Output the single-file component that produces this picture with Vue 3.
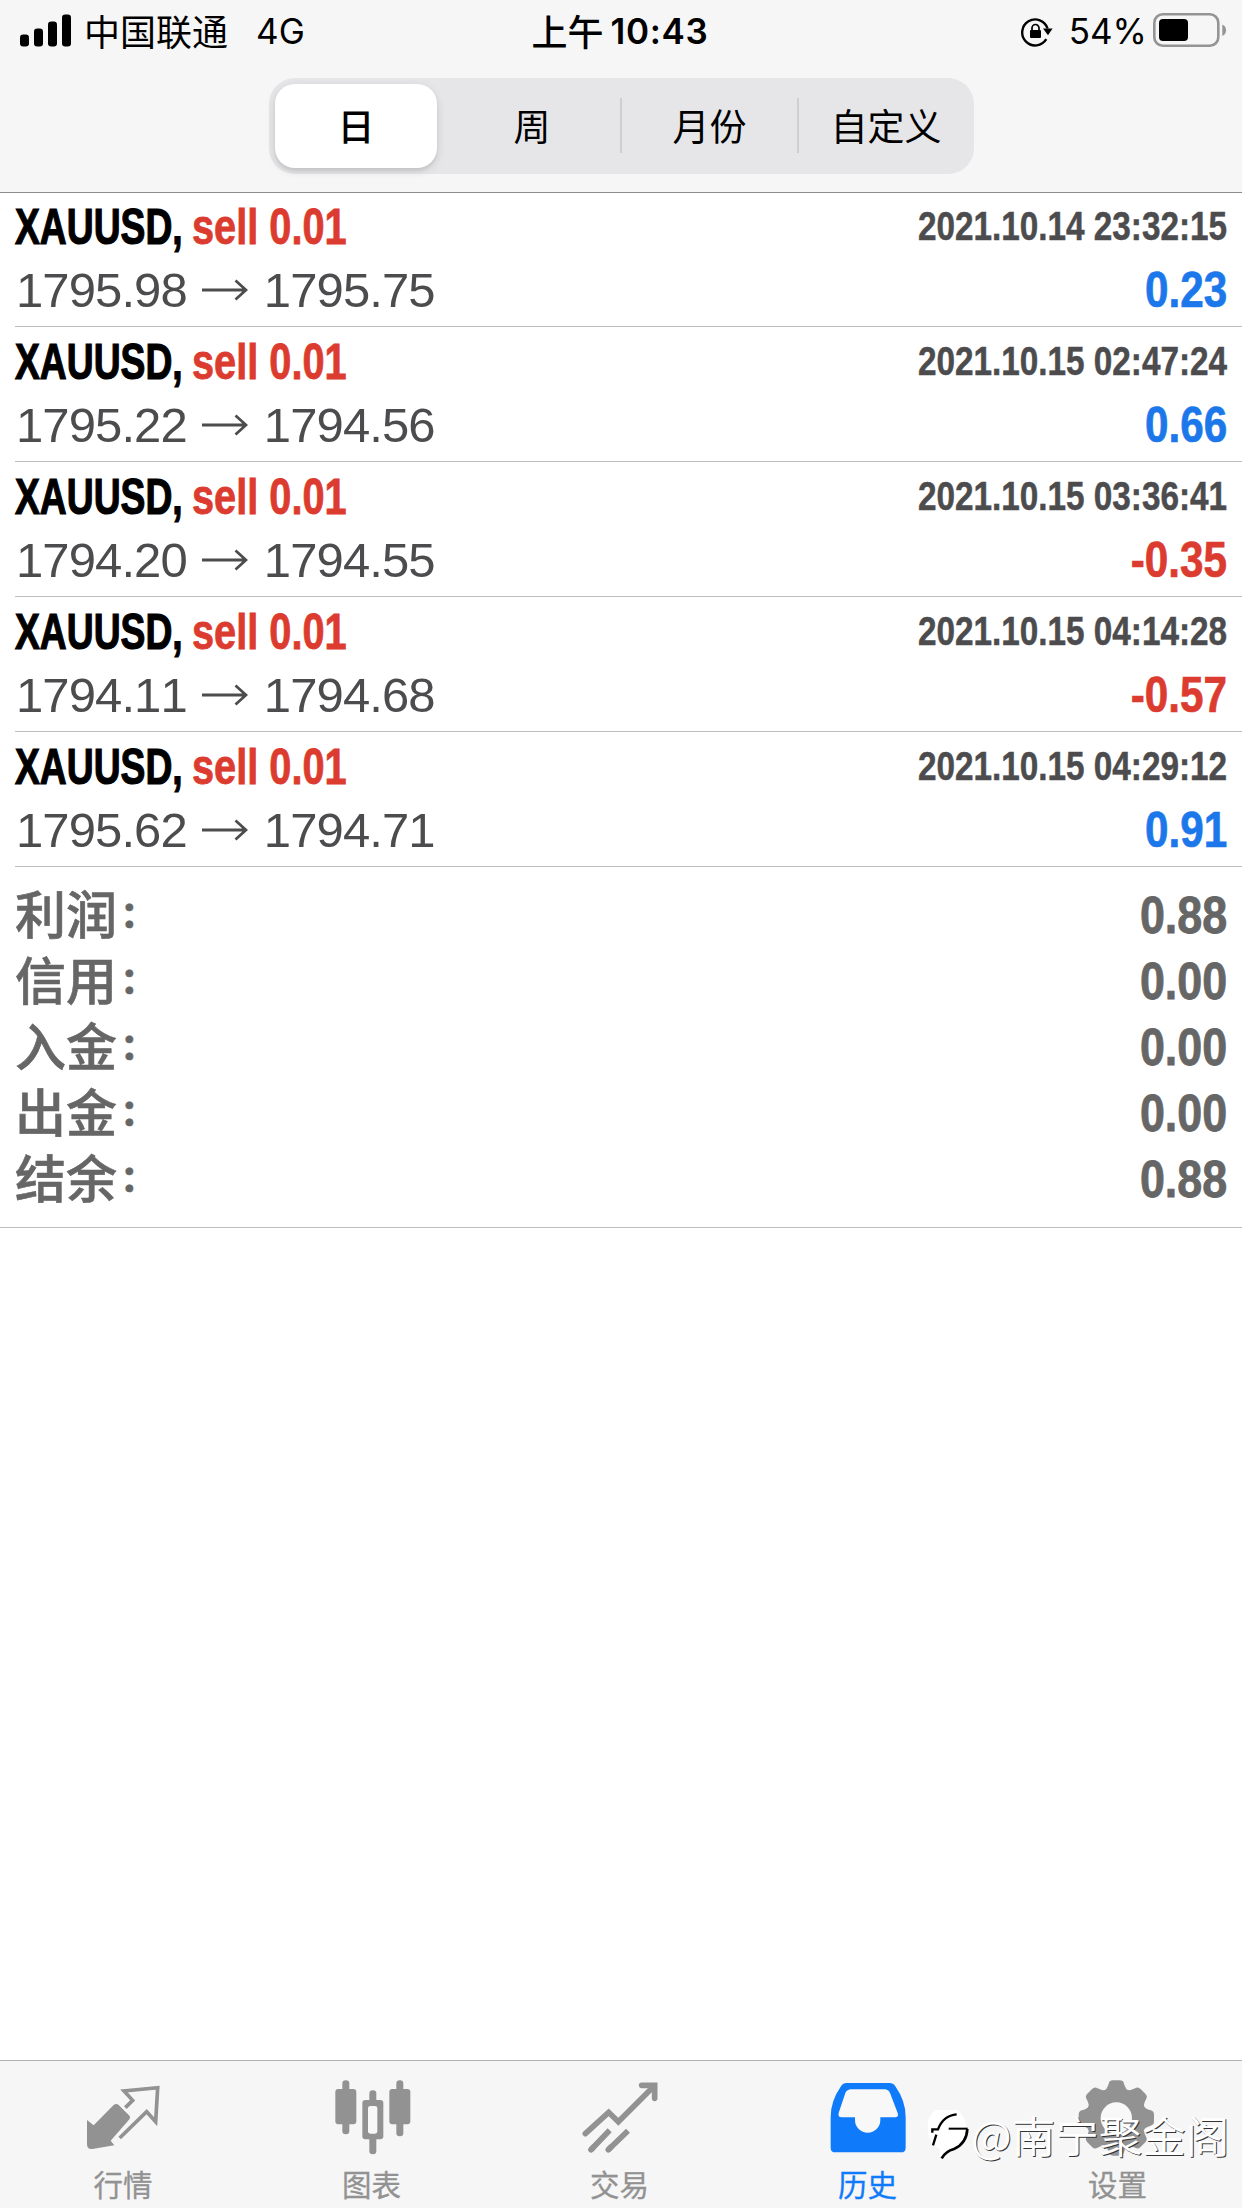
<script setup>
const periods = ['日', '周', '月份', '自定义']

const deals = [
  { open: '1795.98', close: '1795.75', time: '2021.10.14 23:32:15', profit: '0.23' },
  { open: '1795.22', close: '1794.56', time: '2021.10.15 02:47:24', profit: '0.66' },
  { open: '1794.20', close: '1794.55', time: '2021.10.15 03:36:41', profit: '-0.35' },
  { open: '1794.11', close: '1794.68', time: '2021.10.15 04:14:28', profit: '-0.57' },
  { open: '1795.62', close: '1794.71', time: '2021.10.15 04:29:12', profit: '0.91' },
]

const totals = [
  { label: '利润', value: '0.88' },
  { label: '信用', value: '0.00' },
  { label: '入金', value: '0.00' },
  { label: '出金', value: '0.00' },
  { label: '结余', value: '0.88' },
]
</script>

<template>
  <div class="screen">
    <header class="top">
      <div class="status">
        <div class="status-left">
          <svg class="signal" width="52" height="34" viewBox="0 0 52 34">
            <rect x="0" y="20.5" width="9" height="12" rx="3.2" />
            <rect x="14" y="14.5" width="9" height="18" rx="3.2" />
            <rect x="28" y="7.5" width="9" height="25" rx="3.2" />
            <rect x="42" y="0.5" width="9" height="32" rx="3.2" />
          </svg>
          <span class="carrier">中国联通</span>
          <span class="network">4G</span>
        </div>
        <div class="clock"><span class="ampm">上午</span><span>10:43</span></div>
        <div class="status-right">
          <svg class="lock" width="32" height="30" viewBox="0 0 32 30">
            <path d="M25.3 22.2A13 13 0 1 1 26.6 11.5" fill="none" stroke="#000" stroke-width="2.4" />
            <path d="M22 11.6h9.6l-4.6 6.6z" />
            <rect x="9" y="13" width="11" height="8" rx="1" />
            <path d="M11 14v-3a3.5 3.5 0 0 1 7 0v3" fill="none" stroke="#000" stroke-width="1.7" />
          </svg>
          <span class="percent">54%</span>
          <svg class="battery" width="75" height="34" viewBox="0 0 75 34">
            <rect x="1.3" y="1.3" width="64" height="31.4" rx="8.5" fill="none" stroke="#949494" stroke-width="2.6" />
            <rect x="6" y="6" width="29" height="22" rx="4" />
            <path d="M69.3 11.5c5 2 5 9.5 0 11.5z" fill="#949494" />
          </svg>
        </div>
      </div>
      <div class="segments">
        <div v-for="(p, i) in periods" :key="p" class="segment" :class="{ active: i === 0, divided: i > 1 }">{{ p }}</div>
      </div>
    </header>

    <main class="content">
      <article v-for="deal in deals" :key="deal.time" class="deal">
        <div class="deal-head">
          <div class="title"><span class="symbol">XAUUSD,</span><span class="side">sell 0.01</span></div>
          <span class="time">{{ deal.time }}</span>
        </div>
        <div class="deal-body">
          <div class="prices">
            <span>{{ deal.open }}</span>
            <svg class="arrow" width="46" height="22" viewBox="0 0 46 22">
              <path d="M0 11H44M33.5 1.5L44 11L33.5 20.5" />
            </svg>
            <span>{{ deal.close }}</span>
          </div>
          <span class="profit" :class="{ loss: deal.profit.startsWith('-') }">{{ deal.profit }}</span>
        </div>
      </article>
      <section class="totals">
        <div v-for="t in totals" :key="t.label" class="total">
          <span class="total-label">{{ t.label }}<span class="colon">:</span></span>
          <span class="total-value">{{ t.value }}</span>
        </div>
      </section>
    </main>

    <nav class="tabs">
      <div class="tab">
        <svg class="icon" viewBox="54 80 270 240">
          <path d="M161 164q8-6 15 0l31 31q6 6 0 13l-55 63 11 14-66 11q-16 2-16-14v-73l20 16z" fill="currentColor" />
          <path d="M196 172L218 150 192 122 293 112 287 214 260 184 179 263" fill="none" stroke="currentColor" stroke-width="11" />
        </svg>
        <span>行情</span>
      </div>
      <div class="tab">
        <svg class="icon" viewBox="800 80 270 240">
          <g fill="currentColor">
            <rect x="846" y="90" width="21" height="162" rx="10" />
            <rect x="825" y="116" width="63" height="106" rx="9" />
            <rect x="1008" y="90" width="21" height="168" rx="10" />
            <rect x="987" y="116" width="63" height="106" rx="9" />
            <rect x="927" y="120" width="21" height="45" rx="10" />
            <rect x="927" y="250" width="21" height="62" rx="10" />
            <rect x="906" y="149" width="63" height="118" rx="9" />
          </g>
          <rect x="923" y="167" width="28" height="83" rx="7" fill="#f8f8f8" />
        </svg>
        <span>图表</span>
      </div>
      <div class="tab">
        <svg class="icon" viewBox="103 80 270 240">
          <g fill="none" stroke="currentColor" stroke-width="17" stroke-linecap="round">
            <path d="M134 250L204 186 233 214 338 109" stroke-linejoin="miter" />
            <path d="M303 105H342V144" />
            <path d="M151 298L207 240M203 298L262 241" stroke-linecap="butt" />
            <path d="M151 298l8-8M203 298l8-8" />
          </g>
        </svg>
        <span>交易</span>
      </div>
      <div class="tab current">
        <svg class="icon" viewBox="847 80 270 240">
          <path d="M918 98h128q12 0 18 10 31 44 31 92v92q0 14-14 14H884q-14 0-14-14v-92q0-48 31-92 6-10 17-10z" fill="currentColor" />
          <path d="M932 117h100q11 0 16 11l23 60q4 13-8 13h-44v8a38 38 0 0 1-76 0v-8h-40q-12 0-9-13l20-60q5-11 18-11z" fill="#f8f8f8" />
        </svg>
        <span>历史</span>
      </div>
      <div class="tab">
        <svg class="icon" viewBox="519 80 270 240">
          <g fill="currentColor">
            <circle cx="649" cy="203" r="91" />
            <path v-for="n in 8" :key="n" :transform="`rotate(${n * 45} 649 203)`" d="M606 130Q622 116 626 100Q628 90 639 90H659Q670 90 672 100Q676 116 692 130z" />
          </g>
          <circle cx="649" cy="203" r="47" fill="#f8f8f8" />
        </svg>
        <span>设置</span>
      </div>
    </nav>

    <div class="watermark">
      <svg width="45" height="50" viewBox="75 205 135 150">
        <path d="M84 262a56 56 0 0 1 112-20q14 40-16 72-24 20-44 14-10 8-14 20-4-16 0-24-38-18-38-62z" fill="#fff" />
        <g fill="none" stroke="#000">
          <path d="M97 273V263H114Q130 221 170 218" stroke-width="7" />
          <path d="M146 261H203" stroke-width="6" />
          <path d="M109 279L99 311" stroke-width="7" />
          <path d="M202 262Q200 305 162 322Q137 329 125 350" stroke-width="8" />
        </g>
      </svg>
      <span>@南宁聚金阁</span>
    </div>
  </div>
</template>

<style>
body {
  background: #fff;
}
</style>

<style scoped>
.screen {
  position: relative;
  display: flex;
  flex-direction: column;
  width: 1242px;
  height: 2208px;
  overflow: hidden;
  background: #fff;
  color: #000;
  font-family: "Liberation Sans", "Noto Sans CJK SC", sans-serif;
}

.top {
  box-sizing: border-box;
  height: 193px;
  background: #f6f6f6;
  border-bottom: 1px solid #8c8c8c;
}

.status {
  display: grid;
  grid-template-columns: 1fr auto 1fr;
  height: 78px;
  font: 400 35px/62px Inter, "Noto Sans CJK SC", sans-serif;
}

.status-left,
.status-right {
  display: flex;
  align-items: flex-start;
}

.signal {
  margin: 14px 12px 0 20px;
}

.carrier {
  font: 400 36px/60px "Noto Sans CJK SC", sans-serif;
}

.network {
  margin-left: 28px;
}

.clock {
  display: flex;
  font-weight: 600;
  letter-spacing: 0.7px;
}

.ampm {
  font: 500 36px/60px "Noto Sans CJK SC", sans-serif;
  letter-spacing: 0;
  margin: 0 7px 0 -2px;
}

.status-right {
  justify-content: flex-end;
}

.lock {
  margin: 17px 16px 0 0;
}

.percent {
  margin-right: 6px;
}

.battery {
  margin: 13px 14px 0 0;
}

.segments {
  display: grid;
  grid-template-columns: 162px 184px 177px 176px;
  box-sizing: border-box;
  width: 705px;
  height: 96px;
  margin-left: 269px;
  padding: 6px 0 6px 6px;
  border-radius: 26px;
  background: #e6e6e8;
}

.segment {
  position: relative;
  font: 400 37px/82px "Noto Sans CJK SC", sans-serif;
  text-align: center;
}

.segment:nth-child(2) {
  padding-left: 6px;
}

.segment.active {
  background: #fff;
  border-radius: 20px;
  font-weight: 500;
  box-shadow: 0 3px 10px rgba(0, 0, 0, 0.12), 0 3px 3px rgba(0, 0, 0, 0.06);
}

.divided::before {
  content: "";
  position: absolute;
  left: -1px;
  top: 14px;
  width: 2px;
  height: 55px;
  background: #cfcfd2;
}

.deal {
  box-sizing: border-box;
  height: 135px;
  margin-left: 15px;
  padding: 1px 15px 0 0;
  border-bottom: 1px solid #bdbdbf;
}

.deal:first-child {
  height: 134px;
  padding-top: 0;
}

.deal-head,
.deal-body {
  display: flex;
  justify-content: space-between;
}

.deal-head {
  height: 66px;
}

.title {
  display: flex;
  font: 700 50px/68px "Liberation Sans", sans-serif;
}

.symbol {
  width: 177px;
  transform: scaleX(0.745);
  transform-origin: left;
  -webkit-text-stroke: 1.2px;
}

.side {
  color: #dc3b2f;
  white-space: nowrap;
  transform: scaleX(0.795);
  transform-origin: left;
  -webkit-text-stroke: 0.8px;
}

.time {
  color: #4c4c4e;
  font: 700 40.5px/66px "Liberation Sans", sans-serif;
  white-space: nowrap;
  transform: scaleX(0.822);
  transform-origin: right;
  -webkit-text-stroke: 0.5px;
}

.prices {
  display: flex;
  align-items: center;
  margin-left: 1px;
  color: #4c4c4e;
  font: 400 49px/60px "Liberation Sans", sans-serif;
  font-kerning: none;
  letter-spacing: -0.9px;
}

.arrow {
  margin: 0 16px 0 15px;
  fill: none;
  stroke: #4c4c4e;
  stroke-width: 2.8;
}

.profit {
  color: #1c78ea;
  font: 700 50px/62px "Liberation Sans", sans-serif;
  transform: scaleX(0.845);
  transform-origin: right;
  -webkit-text-stroke: 0.7px;
}

.loss {
  color: #dc3b2f;
}

.totals {
  box-sizing: border-box;
  height: 361px;
  padding: 16px 15px 0 15px;
  border-bottom: 1px solid #bdbdbf;
}

.total {
  display: flex;
  justify-content: space-between;
  height: 66px;
  color: #666;
}

.total-label {
  font: 500 51px/68px "Liberation Sans", "Noto Sans CJK SC", sans-serif;
  -webkit-text-stroke: 0.6px;
}

.colon {
  margin-left: 5px;
  font: 600 46px/1 Inter, sans-serif;
  vertical-align: 6px;
}

.total-value {
  font: 700 51px/66px "Liberation Sans", sans-serif;
  transform: scaleX(0.88);
  transform-origin: right;
  -webkit-text-stroke: 0.8px;
}

.tabs {
  display: grid;
  grid-template-columns: 246px 251px 245px 251px 249px;
  box-sizing: border-box;
  height: 148px;
  margin-top: auto;
  background: #f6f6f6;
  border-top: 1px solid #b2b2b2;
  color: #929292;
}

.tab {
  display: flex;
  flex-direction: column;
  align-items: center;
  font: 400 29.5px/44px "Noto Sans CJK SC", sans-serif;
  -webkit-text-stroke: 0.3px;
}

.current {
  color: #0f7bfb;
}

.icon {
  width: 90px;
  height: 80px;
  margin: 16px 0 4px;
}

.watermark {
  position: absolute;
  left: 925px;
  top: 2104px;
  display: flex;
  align-items: center;
  gap: 1px;
  color: #fff;
  font: 350 43.5px/62px "Noto Sans CJK SC", sans-serif;
  white-space: nowrap;
  text-shadow: 1px 1px 0.5px #333;
}
</style>
